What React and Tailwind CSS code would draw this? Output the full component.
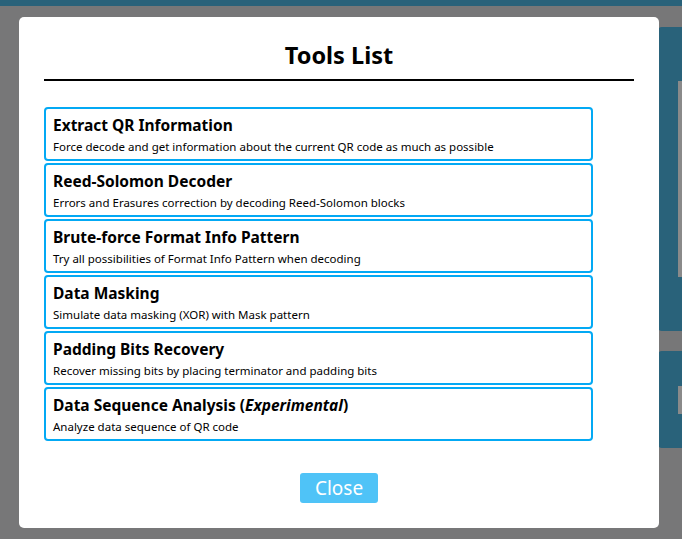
import React from 'react';

const TOOLS = [
  { title: 'Extract QR Information', desc: 'Force decode and get information about the current QR code as much as possible' },
  { title: 'Reed-Solomon Decoder', desc: 'Errors and Erasures correction by decoding Reed-Solomon blocks' },
  { title: 'Brute-force Format Info Pattern', desc: 'Try all possibilities of Format Info Pattern when decoding' },
  { title: 'Data Masking', desc: 'Simulate data masking (XOR) with Mask pattern' },
  { title: 'Padding Bits Recovery', desc: 'Recover missing bits by placing terminator and padding bits' },
  { title: 'Data Sequence Analysis', desc: 'Analyze data sequence of QR code', experimental: true },
];

export default function App() {
  return (
    <div className="relative w-[682px] h-[539px] overflow-hidden bg-[#777778]" style={{ fontFamily: '"Noto Sans", "Open Sans", sans-serif' }}>
      {/* page behind the overlay */}
      <div className="h-[6px] bg-[#29627a]" />
      <div className="flex flex-col items-end gap-[20px] pt-[21px]">
        <div className="w-[24px] h-[304px] bg-[#29627a] rounded-l-[4px] flex items-center justify-end">
          <div className="w-[4px] h-[196px] bg-[#8a8a8a]" />
        </div>
        <div className="w-[24px] h-[97px] bg-[#29627a] rounded-l-[4px] flex items-center justify-end">
          <div className="w-[4px] h-[28px] bg-[#8a8a8a]" />
        </div>
      </div>

      {/* modal */}
      <div className="absolute left-[19px] top-[17px] w-[640px] h-[511px] bg-white rounded-[5px] px-[25px]">
        <h1 className="text-[23.5px] font-bold text-black text-center leading-[32px] pt-[22px] pb-[8px]">Tools List</h1>
        <div className="h-[2px] bg-black" />
        <div className="flex flex-col gap-[2px] mt-[26px] w-[549px]">
          {TOOLS.map((t) => (
            <div key={t.title} className="h-[54px] border-2 border-[#03a9f4] rounded-[4px] px-[7px] pt-[6px]">
              <div className="text-[15.5px] font-bold text-black leading-[21px]">
                {t.title}
                {t.experimental && (
                  <> (<i>Experimental</i>)</>
                )}
              </div>
              <div className="text-[11.5px] text-black leading-[21px]">{t.desc}</div>
            </div>
          ))}
        </div>
        <div className="flex justify-center mt-[32px]">
          <button className="w-[78px] h-[30px] bg-[#4fc3f7] text-white text-[19px] leading-[30px] rounded-[3px]">Close</button>
        </div>
      </div>
    </div>
  );
}
